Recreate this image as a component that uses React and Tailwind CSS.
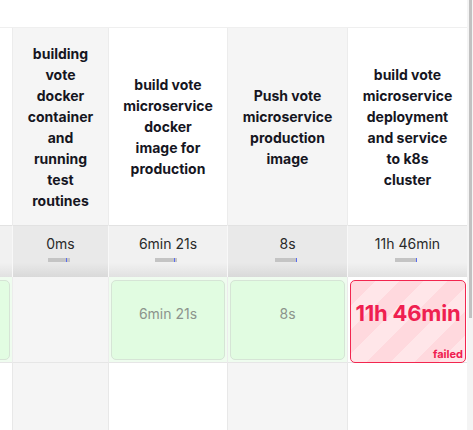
import React from "react";

const columns = [
  { key: "c0", width: "w-[13px]", shade: false, lines: [], duration: "", tick: 0, cell: "partial" },
  {
    key: "c1",
    width: "w-[96px]",
    shade: true,
    lines: ["building", "vote", "docker", "container", "and", "running", "test", "routines"],
    duration: "0ms",
    tick: 18,
    cell: "empty",
  },
  {
    key: "c2",
    width: "w-[119px]",
    shade: false,
    lines: ["build vote", "microservice", "docker", "image for", "production"],
    duration: "6min 21s",
    tick: 19,
    cell: "success",
    time: "6min 21s",
  },
  {
    key: "c3",
    width: "w-[120px]",
    shade: true,
    lines: ["Push vote", "microservice", "production", "image"],
    duration: "8s",
    tick: 21,
    cell: "success",
    time: "8s",
  },
  {
    key: "c4",
    width: "w-[119px]",
    shade: false,
    lines: ["build vote", "microservice", "deployment", "and service", "to k8s", "cluster"],
    duration: "11h 46min",
    tick: 21,
    cell: "failed",
    time: "11h 46min",
  },
];

function DurationBar({ tick }) {
  return (
    <div className="relative mt-[5px] h-[4px] w-[22px] -translate-x-[2px] bg-[#c4c4c4]">
      <div className="absolute top-0 h-[4px] w-[1px] bg-[#5a6cf2]" style={{ left: tick }} />
    </div>
  );
}

function StageCell({ col }) {
  if (col.cell === "partial") {
    return (
      <div className="flex h-full justify-end overflow-hidden bg-[#effcef] pt-[3px] pb-[2px] pr-[2px]">
        <div className="h-[80px] w-[110px] shrink-0 rounded-[5px] border border-[#d6e4d6] bg-[#e2fde2]" />
      </div>
    );
  }
  if (col.cell === "empty") {
    return <div className="h-full bg-[#f5f5f5]" />;
  }
  if (col.cell === "success") {
    return (
      <div className="h-full bg-[#effcef] px-[2px] pt-[3px]">
        <div className="flex h-[80px] items-center justify-center rounded-[5px] border border-[#d6e4d6] bg-[#e1fce1] pb-[14px] text-[14px] text-[#8c948c]">
          {col.time}
        </div>
      </div>
    );
  }
  return (
    <div className="h-full bg-white pl-[2px] pr-[1px] pt-[3px]">
      <div className="relative flex h-[83px] items-center justify-center rounded-[5px] border-[1.5px] border-[#f2264f] bg-[repeating-linear-gradient(135deg,#ffd9de_0px,#ffd9de_17px,#ffe6e9_17px,#ffe6e9_34px)] pb-[16px]">
        <span className="text-[22px] font-bold tracking-[-0.2px] text-[#ef2050]">{col.time}</span>
        <span className="absolute bottom-[2px] right-[2px] text-[11px] font-bold leading-none text-[#ef2050]">
          failed
        </span>
      </div>
    </div>
  );
}

export default function App() {
  return (
    <div className="flex h-[430px] w-[473px] overflow-hidden bg-white font-['Inter',sans-serif]">
      <div className="flex w-[467px] flex-col">
        <div className="h-[28px] shrink-0 border-b border-[#efefef] bg-white" />

        <div className="flex h-[197px] shrink-0">
          {columns.map((col, i) => (
            <div
              key={col.key}
              className={`${col.width} flex shrink-0 flex-col items-center justify-center ${
                i < columns.length - 1 ? "border-r border-[#ececec]" : ""
              } ${col.shade ? "bg-[#f5f5f5]" : "bg-white"}`}
            >
              {col.lines.map((line) => (
                <span
                  key={line}
                  className="whitespace-nowrap text-center text-[14px] font-bold leading-[21px] text-[#16161f]"
                >
                  {line}
                </span>
              ))}
            </div>
          ))}
        </div>

        <div className="flex h-[52px] shrink-0">
          {columns.map((col, i) => (
            <div
              key={col.key}
              className={`${col.width} flex shrink-0 flex-col items-center border-t border-[#e2e2e2] pt-[9px] ${
                i < columns.length - 1 ? "border-r border-r-[#f8f8f8]" : ""
              } ${
                col.shade
                  ? "bg-[linear-gradient(#e9e9e9_0%,#e9e9e9_72%,#d9d9d9_100%)]"
                  : "bg-[linear-gradient(#f1f1f1_0%,#f1f1f1_72%,#e1e1e1_100%)]"
              }`}
            >
              {col.duration && (
                <>
                  <span className="whitespace-nowrap text-[14px] leading-[18px] text-[#2a2a2a]">{col.duration}</span>
                  <DurationBar tick={col.tick} />
                </>
              )}
            </div>
          ))}
        </div>

        <div className="flex h-[86px] shrink-0">
          {columns.map((col, i) => (
            <div
              key={col.key}
              className={`${col.width} shrink-0 border-b border-[#e6e6e6] ${
                i < columns.length - 1 ? "border-r border-r-[#ececec]" : ""
              }`}
            >
              <StageCell col={col} />
            </div>
          ))}
        </div>

        <div className="flex flex-1">
          {columns.map((col, i) => (
            <div
              key={col.key}
              className={`${col.width} shrink-0 ${i < columns.length - 1 ? "border-r border-[#e8e8e8]" : ""} ${
                col.shade ? "bg-[#f5f5f5]" : "bg-white"
              }`}
            />
          ))}
        </div>
      </div>

      <div className="flex w-[6px] shrink-0 bg-[#f4f4f4] pl-[2px]">
        <div className="h-[318px] w-[3px] bg-[#c1c1c1]" />
      </div>
    </div>
  );
}
